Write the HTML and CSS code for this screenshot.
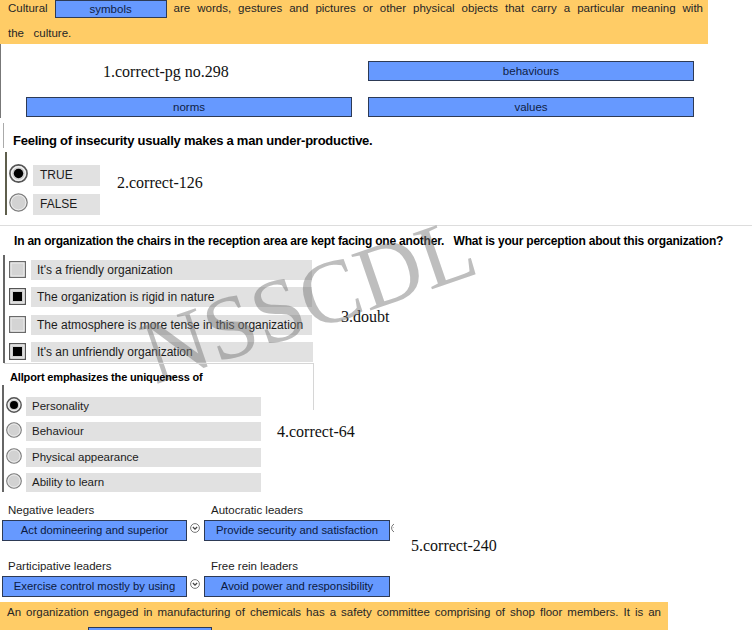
FILE: index.html
```html
<!DOCTYPE html>
<html>
<head>
<meta charset="utf-8">
<title>Quiz collage</title>
<link rel="stylesheet" href="styles.css">
</head>
<body>
<section class="p1">
  <div class="banner b1">
    <div class="jline">Cultural <span class="blank b-sym">symbols</span> are words, gestures and pictures or other physical objects that carry a particular meaning with</div>
    <div class="l2">the&nbsp;&nbsp; culture.</div>
  </div>
  <div class="p1-body">
    <div class="note n1">1.correct-pg no.298</div>
    <div class="blank opt">behaviours</div>
    <div class="blank opt">norms</div>
    <div class="blank opt">values</div>
  </div>
</section>

<section class="p2">
  <div class="q2head">Feeling of insecurity usually makes a man under-productive.</div>
  <div class="q2body">
    <div class="list2">
      <div class="r2">
        <svg class="rb" viewBox="0 0 19 19"><circle cx="9.5" cy="9.5" r="8.6" fill="#cdcdcd" stroke="#555" stroke-width="1.6"/><circle cx="9.5" cy="9.5" r="6.9" fill="none" stroke="#f4f4f4" stroke-width="1.2"/><circle cx="9.5" cy="9.5" r="4.7" fill="#000"/></svg>
        <span class="lbl lbl2">TRUE</span>
      </div>
      <div class="r2">
        <svg class="rb" viewBox="0 0 19 19"><circle cx="9.5" cy="9.5" r="8.7" fill="#d2d2d2" stroke="#7a7a7a" stroke-width="1.2"/><circle cx="9.5" cy="9.5" r="7.3" fill="none" stroke="#ececec" stroke-width="1"/></svg>
        <span class="lbl lbl2">FALSE</span>
      </div>
    </div>
    <div class="note n2">2.correct-126</div>
  </div>
</section>

<section class="p3">
  <div class="q3">In an organization the chairs in the reception area are kept facing one another.&nbsp;&nbsp; What is your perception about this organization?</div>
  <div class="q3body">
    <div class="list3">
      <div class="r3">
        <svg class="cb" viewBox="0 0 17 17"><rect x="0.6" y="0.6" width="15.8" height="15.8" fill="#d4d4d4" stroke="#6a6a6a" stroke-width="1.2"/><rect x="2" y="2" width="13" height="13" fill="none" stroke="#eeeeee"/></svg>
        <span class="lbl lbl3">It's a friendly organization</span>
      </div>
      <div class="r3">
        <svg class="cb" viewBox="0 0 17 17"><rect x="0.6" y="0.6" width="15.8" height="15.8" fill="#cfcfcf" stroke="#555" stroke-width="1.2"/><rect x="2" y="2" width="13" height="13" fill="none" stroke="#eeeeee"/><rect x="4" y="4" width="9" height="9" fill="#000"/></svg>
        <span class="lbl lbl3">The organization is rigid in nature</span>
      </div>
      <div class="r3">
        <svg class="cb" viewBox="0 0 17 17"><rect x="0.6" y="0.6" width="15.8" height="15.8" fill="#d4d4d4" stroke="#6a6a6a" stroke-width="1.2"/><rect x="2" y="2" width="13" height="13" fill="none" stroke="#eeeeee"/></svg>
        <span class="lbl lbl3">The atmosphere is more tense in this organization</span>
      </div>
      <div class="r3">
        <svg class="cb" viewBox="0 0 17 17"><rect x="0.6" y="0.6" width="15.8" height="15.8" fill="#cfcfcf" stroke="#555" stroke-width="1.2"/><rect x="2" y="2" width="13" height="13" fill="none" stroke="#eeeeee"/><rect x="4" y="4" width="9" height="9" fill="#000"/></svg>
        <span class="lbl lbl3 wide">It's an unfriendly organization</span>
      </div>
    </div>
    <div class="note n3">3.doubt</div>
  </div>
  <div class="wm">NSSCDL</div>
</section>

<section class="p4">
  <div class="q4">Allport emphasizes the uniqueness of</div>
  <div class="q4body">
    <div class="list4">
      <div class="r4">
        <svg class="rs" viewBox="0 0 16 16"><circle cx="8" cy="8" r="7.2" fill="#cdcdcd" stroke="#555" stroke-width="1.4"/><circle cx="8" cy="8" r="5.7" fill="none" stroke="#f2f2f2" stroke-width="1"/><circle cx="8" cy="8" r="4" fill="#000"/></svg>
        <span class="lbl lbl4">Personality</span>
      </div>
      <div class="r4">
        <svg class="rs" viewBox="0 0 16 16"><circle cx="8" cy="8" r="7.3" fill="#d2d2d2" stroke="#7a7a7a" stroke-width="1.1"/><circle cx="8" cy="8" r="6" fill="none" stroke="#ececec" stroke-width="0.9"/></svg>
        <span class="lbl lbl4">Behaviour</span>
      </div>
      <div class="r4">
        <svg class="rs" viewBox="0 0 16 16"><circle cx="8" cy="8" r="7.3" fill="#d2d2d2" stroke="#7a7a7a" stroke-width="1.1"/><circle cx="8" cy="8" r="6" fill="none" stroke="#ececec" stroke-width="0.9"/></svg>
        <span class="lbl lbl4">Physical appearance</span>
      </div>
      <div class="r4">
        <svg class="rs" viewBox="0 0 16 16"><circle cx="8" cy="8" r="7.3" fill="#d2d2d2" stroke="#7a7a7a" stroke-width="1.1"/><circle cx="8" cy="8" r="6" fill="none" stroke="#ececec" stroke-width="0.9"/></svg>
        <span class="lbl lbl4">Ability to learn</span>
      </div>
    </div>
    <div class="note n4">4.correct-64</div>
  </div>
</section>

<section class="p5">
  <div class="grp">
    <div class="fld f1">
      <div class="flab">Negative leaders</div>
      <div class="blank sel">Act domineering and superior</div>
    </div>
    <svg class="dd" viewBox="0 0 10 10"><circle cx="5" cy="5" r="4.4" fill="#fff" stroke="#777" stroke-width="1"/><path d="M2.9 4 L5 6.1 L7.1 4" fill="none" stroke="#444" stroke-width="1.3"/></svg>
    <div class="fld f2">
      <div class="flab">Autocratic leaders</div>
      <div class="blank sel">Provide security and satisfaction</div>
    </div>
    <span class="ddcut"><svg class="dd dd-in" viewBox="0 0 10 10"><circle cx="5" cy="5" r="4.4" fill="#fff" stroke="#777" stroke-width="1"/><path d="M2.9 4 L5 6.1 L7.1 4" fill="none" stroke="#444" stroke-width="1.3"/></svg></span>
  </div>
  <div class="mid"><span class="note n5">5.correct-240</span></div>
  <div class="grp">
    <div class="fld f1">
      <div class="flab">Participative leaders</div>
      <div class="blank sel">Exercise control mostly by using</div>
    </div>
    <svg class="dd" viewBox="0 0 10 10"><circle cx="5" cy="5" r="4.4" fill="#fff" stroke="#777" stroke-width="1"/><path d="M2.9 4 L5 6.1 L7.1 4" fill="none" stroke="#444" stroke-width="1.3"/></svg>
    <div class="fld f2">
      <div class="flab">Free rein leaders</div>
      <div class="blank sel">Avoid power and responsibility</div>
    </div>
  </div>
</section>

<section class="banner b6">
  <div class="jline">An organization engaged in manufacturing of chemicals has a safety committee comprising of shop floor members. It is an</div>
  <div class="l6b"><span class="blank b6blank"></span></div>
</section>
</body>
</html>
```

FILE: styles.css
```css
html, body {
  margin: 0;
  padding: 0;
}
body {
  width: 752px;
  height: 630px;
  overflow: hidden;
  background: #ffffff;
  font-family: "Liberation Sans", Arial, sans-serif;
  color: #1a1a1a;
}
section {
  box-sizing: border-box;
}

/* shared */
.banner {
  background: #ffcc66;
  color: #262626;
  font-size: 11.5px;
  box-sizing: border-box;
}
.jline {
  text-align: justify;
  text-align-last: justify;
}
.blank {
  display: inline-block;
  box-sizing: border-box;
  background: #6699ff;
  border: 1px solid #2d3a55;
  color: #0f1d45;
  text-align: center;
  text-align-last: auto;
  font-size: 11.5px;
}
.note {
  font-family: "Liberation Serif", "Times New Roman", serif;
  font-size: 16px;
  color: #111;
  line-height: 18px;
  white-space: nowrap;
}
.lbl {
  display: block;
  box-sizing: border-box;
  background: #e1e1e1;
  color: #1c1c1c;
  white-space: nowrap;
}

/* panel 1 */
.b1 {
  width: 708px;
  height: 44px;
  padding: 0 5px 0 8px;
}
.b1 .jline {
  height: 18px;
  line-height: 17px;
}
.b-sym {
  width: 112px;
  height: 18px;
  line-height: 16px;
  vertical-align: top;
}
.l2 {
  margin-top: 6px;
  line-height: 18px;
}
.p1-body {
  height: 74px;
  border-left: 1px solid #777;
  box-sizing: border-box;
  display: grid;
  grid-template-columns: 326px 326px;
  grid-auto-rows: 20px;
  column-gap: 16px;
  row-gap: 16px;
  padding: 17px 0 0 25px;
}
.opt {
  display: block;
  height: 20px;
  line-height: 18px;
}
.n1 {
  padding: 2px 0 0 77px;
}

/* panel 2 */
.p2 {
  height: 107px;
  padding: 5px 0 0 3px;
}
.q2head {
  border-left: 1px solid #aaa;
  height: 25px;
  box-sizing: border-box;
  padding: 11px 0 0 9px;
  font-weight: bold;
  font-size: 13px;
  line-height: 14px;
  color: #000;
  letter-spacing: -0.25px;
  white-space: nowrap;
}
.q2body {
  margin: 4px 0 0 2px;
  border-left: 2px solid #5e5e4c;
  height: 63px;
  box-sizing: border-box;
  padding: 13px 0 0 2px;
  display: flex;
}
.list2 {
  display: flex;
  flex-direction: column;
  gap: 8px;
}
.r2 {
  display: flex;
  align-items: flex-start;
  gap: 5px;
}
.rb {
  width: 19px;
  height: 19px;
  margin-top: -1px;
  flex: none;
}
.lbl2 {
  width: 67px;
  height: 21px;
  line-height: 21px;
  padding-left: 7px;
  font-size: 12px;
}
.n2 {
  margin: 9px 0 0 17px;
}

/* panel 3 */
.p3 {
  position: relative;
  height: 138px;
  border-top: 1px solid #dddddd;
}
.q3 {
  padding: 8px 0 0 14px;
  line-height: 14px;
  font-weight: bold;
  font-size: 12px;
  color: #000;
  white-space: nowrap;
  letter-spacing: -0.2px;
}
.q3body {
  margin: 7px 0 0 3px;
  border-left: 2px solid #666;
  height: 108px;
  box-sizing: border-box;
  padding: 5px 0 0 4px;
  display: flex;
}
.list3 {
  display: flex;
  flex-direction: column;
  gap: 7.33px;
}
.r3 {
  display: flex;
  align-items: flex-start;
  gap: 5px;
}
.cb {
  width: 17px;
  height: 17px;
  margin-top: 1px;
  flex: none;
}
.lbl3 {
  width: 281px;
  height: 20px;
  line-height: 20px;
  padding-left: 6px;
  font-size: 12px;
}
.lbl3.wide {
  width: 282px;
}
.n3 {
  margin: 48px 0 0 28px;
}
.wm {
  position: absolute;
  left: 136px;
  top: 29px;
  font-family: "Liberation Serif", "Times New Roman", serif;
  font-size: 90px;
  line-height: 90px;
  color: rgba(120, 120, 120, 0.48);
  transform: rotate(-19deg);
  transform-origin: center center;
  white-space: nowrap;
  pointer-events: none;
}

/* panel 4 */
.p4 {
  position: relative;
  height: 132px;
}
.p4::before {
  content: "";
  position: absolute;
  left: 4px;
  top: 0;
  width: 310px;
  height: 47px;
  box-sizing: border-box;
  border-top: 1px solid #d6d6d6;
  border-right: 1px solid #d6d6d6;
}
.q4 {
  padding: 8px 0 0 10px;
  line-height: 13px;
  font-weight: bold;
  font-size: 11px;
  color: #000;
  letter-spacing: -0.15px;
}
.q4body {
  margin: 1px 0 0 2px;
  border-left: 2px solid #666;
  padding: 12px 0 0 2px;
  display: flex;
  width: 400px;
}
.list4 {
  display: flex;
  flex-direction: column;
  gap: 6.33px;
}
.r4 {
  display: flex;
  align-items: flex-start;
  gap: 4px;
}
.rs {
  width: 16px;
  height: 16px;
  flex: none;
}
.lbl4 {
  width: 235px;
  height: 19px;
  line-height: 19px;
  padding-left: 6px;
  font-size: 11.5px;
}
.n4 {
  margin: 26px 0 0 16px;
}

/* panel 5 */
.p5 {
  height: 107px;
  padding: 8px 0 0 2px;
}
.grp {
  display: flex;
  align-items: flex-end;
}
.fld {
  display: flex;
  flex-direction: column;
}
.f1 {
  width: 185px;
}
.f2 {
  width: 186px;
}
.flab {
  font-size: 11.5px;
  line-height: 14px;
  margin-bottom: 3px;
  color: #1c1c1c;
  white-space: nowrap;
}
.f1 .flab {
  padding-left: 6px;
}
.f2 .flab {
  padding-left: 7px;
}
.sel {
  display: block;
  height: 21px;
  line-height: 19px;
  font-size: 11.3px;
  white-space: nowrap;
  color: #0c1a40;
}
.dd {
  width: 10px;
  height: 10px;
  margin: 0 4px 8px 3px;
  flex: none;
}
.ddcut {
  display: block;
  width: 3px;
  height: 10px;
  overflow: hidden;
  margin: 0 0 8px 1px;
}
.dd-in {
  display: block;
  margin: 0;
}
.mid {
  height: 18px;
  line-height: 10px;
  padding-left: 409px;
}
.n5 {
  line-height: 10px;
}

/* panel 6 */
.b6 {
  width: 668px;
  height: 40px;
  padding: 3px 7px 0 7px;
  line-height: 14px;
}
.l6b {
  margin-top: 8px;
}
.b6blank {
  width: 124px;
  height: 20px;
  margin-left: 81px;
  vertical-align: top;
}
```
